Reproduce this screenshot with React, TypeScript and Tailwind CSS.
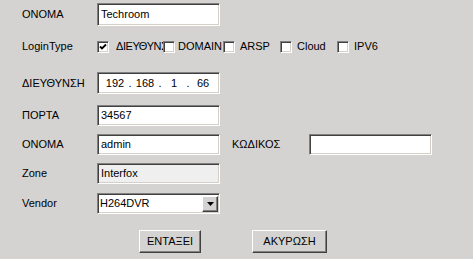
import React from 'react';

const sunken =
  "border border-t-[#808080] border-l-[#808080] border-b-white border-r-white shadow-[inset_1px_1px_0_#404040,inset_-1px_-1px_0_#d4d0c8]";
const raised =
  "border border-t-white border-l-white border-b-[#404040] border-r-[#404040] shadow-[inset_-1px_-1px_0_#808080]";

const Label = ({ children }: { children: React.ReactNode }) => (
  <div className="w-[97px] shrink-0 pl-[22px]">{children}</div>
);

const TextBox = ({ value, grey, h = "h-[21px]" }: { value: string; grey?: boolean; h?: string }) => (
  <div className={`w-[123px] ${h} ${sunken} ${grey ? "bg-[#efefef]" : "bg-white"} flex items-center pl-[3px]`}>
    {value}
  </div>
);

const Check = ({ checked }: { checked?: boolean }) => (
  <div className={`relative z-10 w-[12px] h-[12px] shrink-0 bg-white ${sunken} flex items-center justify-center`}>
    {checked && (
      <svg width="8" height="8" viewBox="0 0 8 8">
        <path d="M1 3.5 L3 5.5 L7 1.5" stroke="#000" strokeWidth="1.8" fill="none" />
      </svg>
    )}
  </div>
);

// the first label runs under the next checkbox, as in the original dialog
const loginTypes = [
  { label: "ΔΙΕΥΘΥΝΣΗ", w: "w-[66px]", gap: "ml-[7px] tracking-[-0.4px]", checked: true },
  { label: "DOMAIN", w: "w-[60px]", gap: "ml-[3px]" },
  { label: "ARSP", w: "w-[57px]", gap: "ml-[5px]" },
  { label: "Cloud", w: "w-[57px]", gap: "ml-[5px]" },
  { label: "IPV6", w: "w-[57px]", gap: "ml-[5px]" },
];

export default function App() {
  return (
    <div
      className="w-[473px] h-[259px] bg-[#d4d3d1] text-black text-[11px] overflow-hidden flex flex-col pt-[3px]"
      style={{ fontFamily: '"Liberation Sans", Arial, sans-serif' }}
    >
      <div className="flex items-center h-[23px]">
        <Label>ONOMA</Label>
        <TextBox value="Techroom" h="h-[23px]" />
      </div>

      <div className="flex items-center h-[13px] mt-[14px]">
        <Label>LoginType</Label>
        {loginTypes.map((t) => (
          <div key={t.label} className={`${t.w} shrink-0 flex items-center whitespace-nowrap`}>
            <Check checked={t.checked} />
            <span className={t.gap}>{t.label}</span>
          </div>
        ))}
      </div>

      <div className="flex items-center h-[22px] mt-[19px]">
        <Label>ΔΙΕΥΘΥΝΣΗ</Label>
        <div className={`w-[123px] h-[22px] ${sunken} bg-white flex items-center pl-[4px]`}>
          <span className="w-[26px] text-center">192</span>
          <span className="w-[4px] text-center">.</span>
          <span className="w-[26px] text-center">168</span>
          <span className="w-[4px] text-center">.</span>
          <span className="w-[24px] text-center">1</span>
          <span className="w-[4px] text-center">.</span>
          <span className="w-[26px] text-center">66</span>
        </div>
      </div>

      <div className="flex items-center h-[21px] mt-[11px]">
        <Label>ΠΟΡΤΑ</Label>
        <TextBox value="34567" />
      </div>

      <div className="flex items-center h-[21px] mt-[8px]">
        <Label>ONOMA</Label>
        <TextBox value="admin" />
        <div className="ml-[12px] w-[77px] shrink-0">ΚΩΔΙΚΟΣ</div>
        <div className={`w-[123px] h-[21px] ${sunken} bg-white`} />
      </div>

      <div className="flex items-center h-[21px] mt-[8px]">
        <Label>Zone</Label>
        <TextBox value="Interfox" grey />
      </div>

      <div className="flex items-center h-[21px] mt-[9px]">
        <Label>Vendor</Label>
        <div className={`w-[123px] h-[21px] ${sunken} bg-white flex items-center pl-[2px] pr-[1px]`}>
          <span className="flex-1">H264DVR</span>
          <div className={`w-[16px] h-[16px] bg-[#d4d3d1] ${raised} flex items-center justify-center`}>
            <svg width="7" height="4" viewBox="0 0 7 4">
              <path d="M0 0 H7 L3.5 4 Z" fill="#000" />
            </svg>
          </div>
        </div>
      </div>

      <div className="flex items-center mt-[16px] pl-[139px] gap-[51px]">
        <button className={`w-[62px] h-[23px] bg-[#d4d3d1] ${raised} flex items-center justify-center`}>
          ΕΝΤΑΞΕΙ
        </button>
        <button className={`w-[75px] h-[23px] bg-[#d4d3d1] ${raised} flex items-center justify-center`}>
          ΑΚΥΡΩΣΗ
        </button>
      </div>
    </div>
  );
}
